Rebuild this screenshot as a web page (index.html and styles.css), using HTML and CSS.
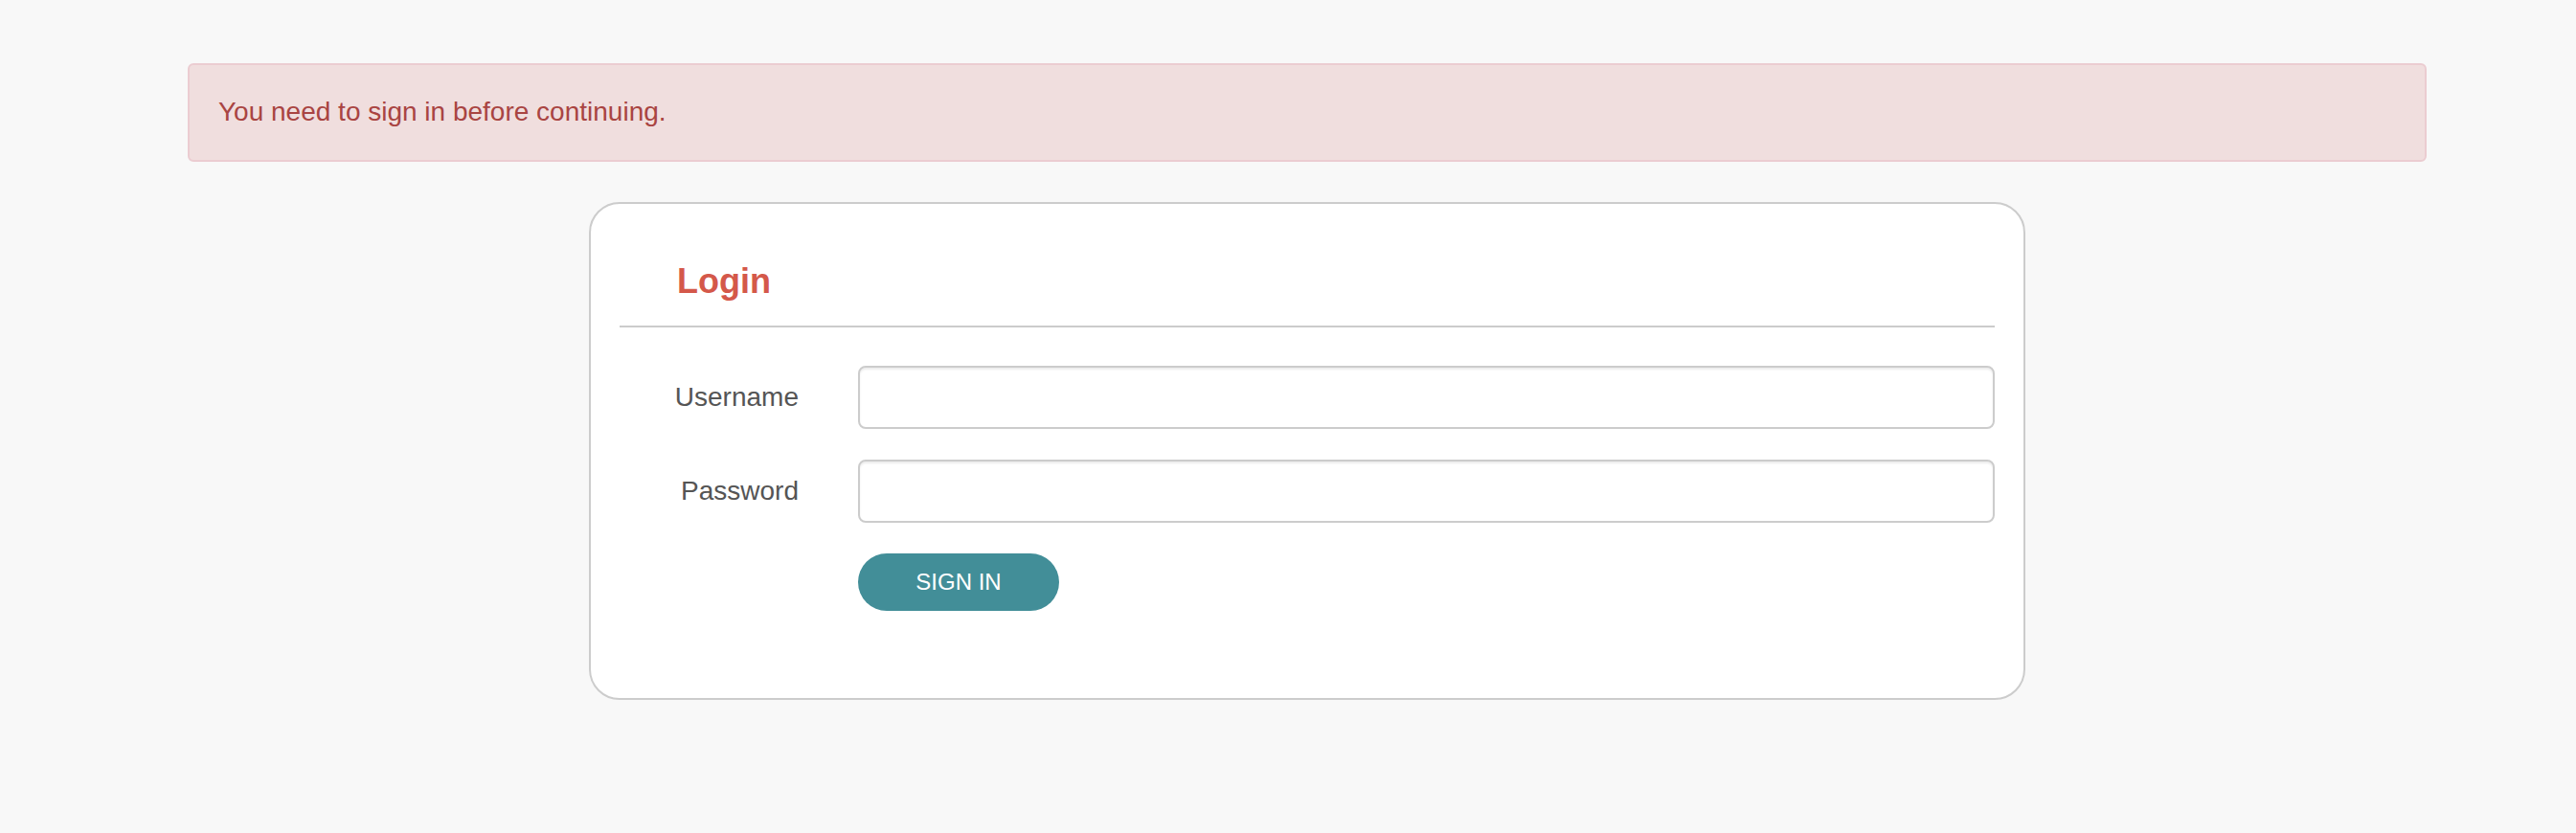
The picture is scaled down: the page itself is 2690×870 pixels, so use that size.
FILE: index.html
```html
<!DOCTYPE html>
<html lang="en">
<head>
<meta charset="utf-8">
<title>Login</title>
<link rel="stylesheet" href="styles.css">
</head>
<body>
<div class="page">
  <div class="alert">You need to sign in before continuing.</div>
  <div class="card">
    <div class="card-header">
      <h2 class="card-title">Login</h2>
    </div>
    <form class="login-form">
      <label class="field-label" for="username">Username</label>
      <input class="field-input" type="text" id="username">
      <label class="field-label" for="password">Password</label>
      <input class="field-input" type="password" id="password">
      <div class="actions">
        <button class="btn-signin" type="button">Sign in</button>
      </div>
    </form>
  </div>
</div>
</body>
</html>
```
FILE: styles.css
```css
* { box-sizing: border-box; }
html, body {
  margin: 0;
  padding: 0;
  background: #f8f8f8;
  font-family: "Liberation Sans", Arial, Helvetica, sans-serif;
}
.page {
  padding: 66px 156px 0 196px;
}
.alert {
  background: #f0dede;
  border: 2px solid #ebccd1;
  border-radius: 6px;
  color: #a94442;
  font-size: 28px;
  line-height: 40px;
  padding: 29px 30px 30px;
}
.card {
  width: 1500px;
  margin: 42px auto 0;
  background: #ffffff;
  border: 2px solid #cccccc;
  border-radius: 32px;
  padding: 0 30px;
}
.card-header {
  padding: 61px 0 26px 60px;
  border-bottom: 2px solid #cccccc;
}
.card-title {
  margin: 0;
  font-size: 36px;
  line-height: 40px;
  font-weight: bold;
  color: #d4584a;
}
.login-form {
  display: grid;
  grid-template-columns: 217px 1fr;
  column-gap: 32px;
  row-gap: 32px;
  align-items: center;
  padding: 40px 0 91px;
}
.field-label {
  text-align: right;
  padding-right: 30px;
  font-size: 28px;
  line-height: 40px;
  color: #555555;
}
.field-input {
  display: block;
  width: 100%;
  height: 66px;
  border: 2px solid #cccccc;
  border-radius: 8px;
  background: #ffffff;
  box-shadow: inset 0 2px 2px rgba(0, 0, 0, 0.075);
  font-size: 28px;
  padding: 0 24px;
  outline: none;
}
.actions {
  grid-column: 2;
}
.btn-signin {
  display: block;
  width: 210px;
  height: 60px;
  border: none;
  border-radius: 30px;
  background: #428e98;
  color: #ffffff;
  font-family: "Liberation Sans", Arial, Helvetica, sans-serif;
  font-size: 24px;
  text-transform: uppercase;
  padding: 0;
  cursor: pointer;
}
```
